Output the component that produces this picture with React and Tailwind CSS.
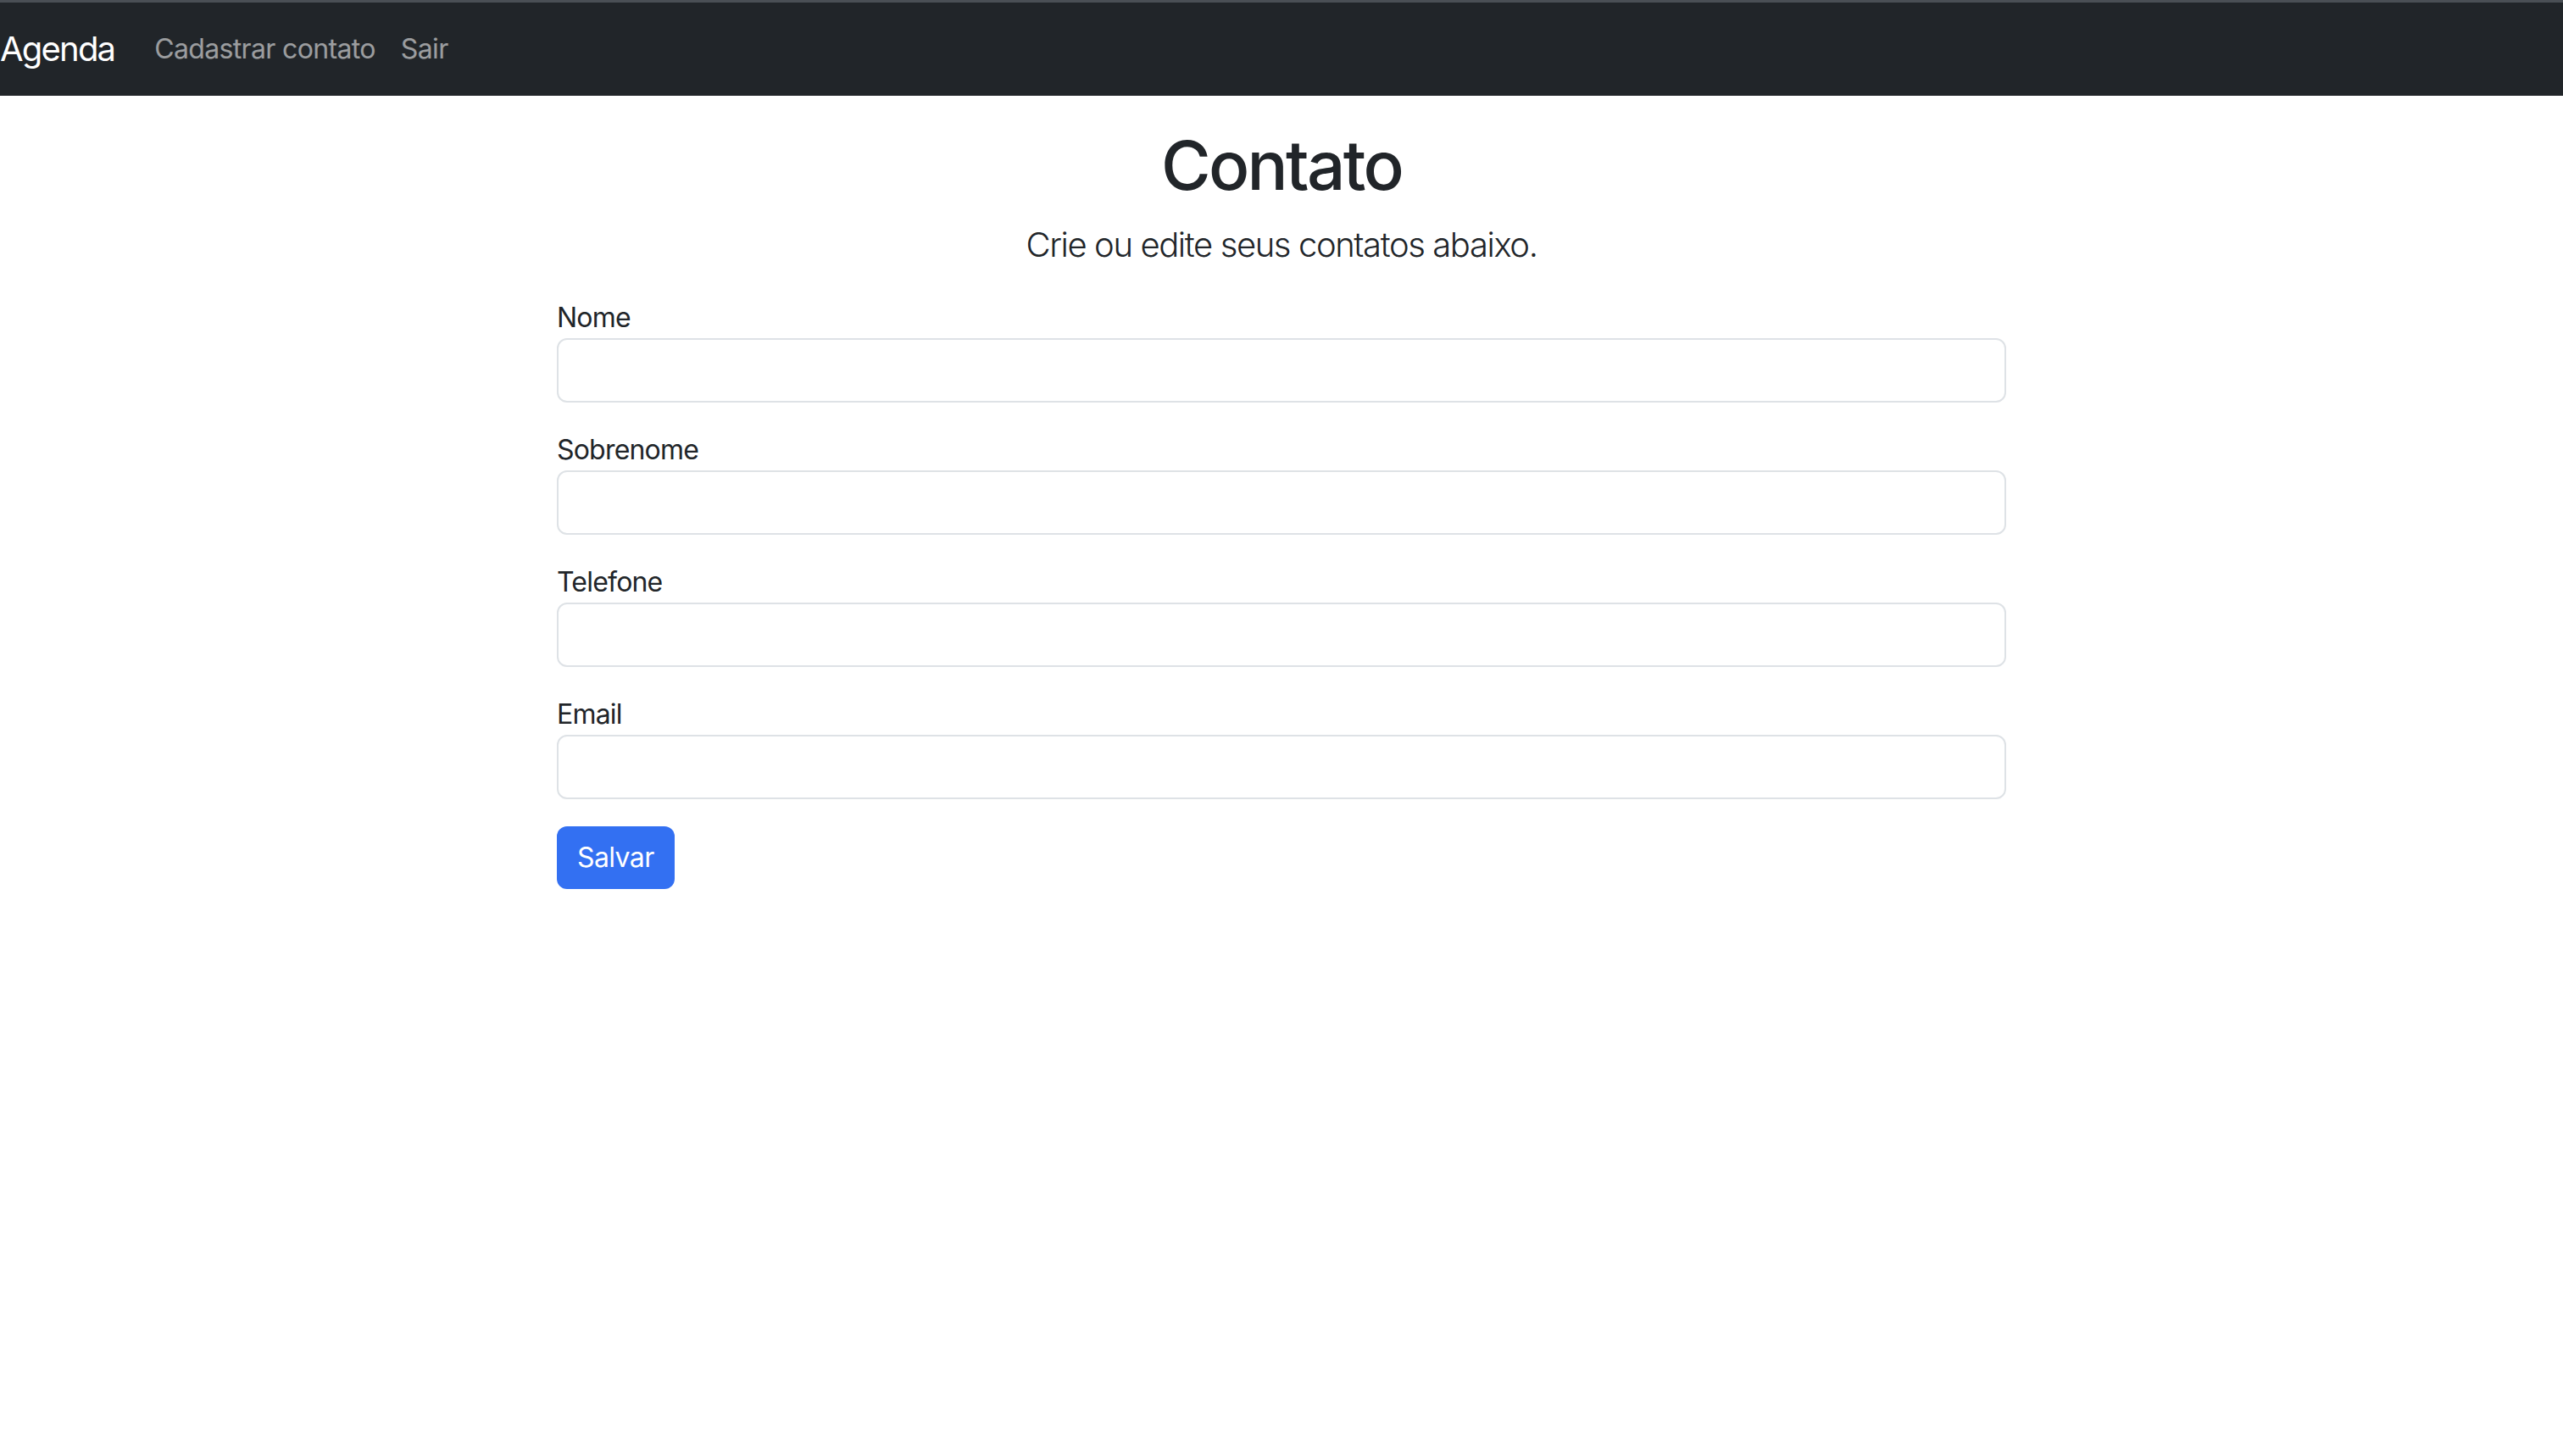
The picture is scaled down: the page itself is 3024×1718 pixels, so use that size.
import React from 'react';

const fields = ['Nome', 'Sobrenome', 'Telefone', 'Email'];

const App = () => {
  return (
    <div className="min-h-screen bg-white text-[#212529] font-['Inter',sans-serif]">
      {/* Navbar */}
      <nav className="bg-[#212529] border-t-[3px] border-[#4a4f55] h-[113px] flex items-center">
        <a href="#" className="text-white text-[40px] leading-[60px] tracking-[-1.8px] mr-[32px]">
          Agenda
        </a>
        <a href="#" className="text-white/55 text-[32px] px-[15px] tracking-[-0.65px]">
          Cadastrar contato
        </a>
        <a href="#" className="text-white/55 text-[32px] px-[15px] tracking-[-0.65px]">
          Sair
        </a>
      </nav>

      <main className="w-[1710px] mx-auto pt-[34px]">
        <div className="text-center">
          <h1 className="text-[80px] leading-[96px] font-medium mb-[16px] tracking-[-2.7px]">Contato</h1>
          <p className="text-[40px] leading-[60px] font-light mb-[32px] tracking-[-1.4px]">
            Crie ou edite seus contatos abaixo.
          </p>
        </div>

        <form>
          {fields.map((label) => (
            <div key={label} className="mb-[32px]">
              <label className="block text-[32px] leading-[48px] tracking-[-0.8px]">{label}</label>
              <input
                type="text"
                className="block w-full h-[76px] border-2 border-[#dee2e6] rounded-[12px] px-[24px] text-[32px] outline-none"
              />
            </div>
          ))}
          <button
            type="button"
            className="bg-[#3370f2] text-white text-[32px] leading-[48px] px-[24px] py-[13px] rounded-[12px] tracking-[-0.6px]"
          >
            Salvar
          </button>
        </form>
      </main>
    </div>
  );
};

export default App;
